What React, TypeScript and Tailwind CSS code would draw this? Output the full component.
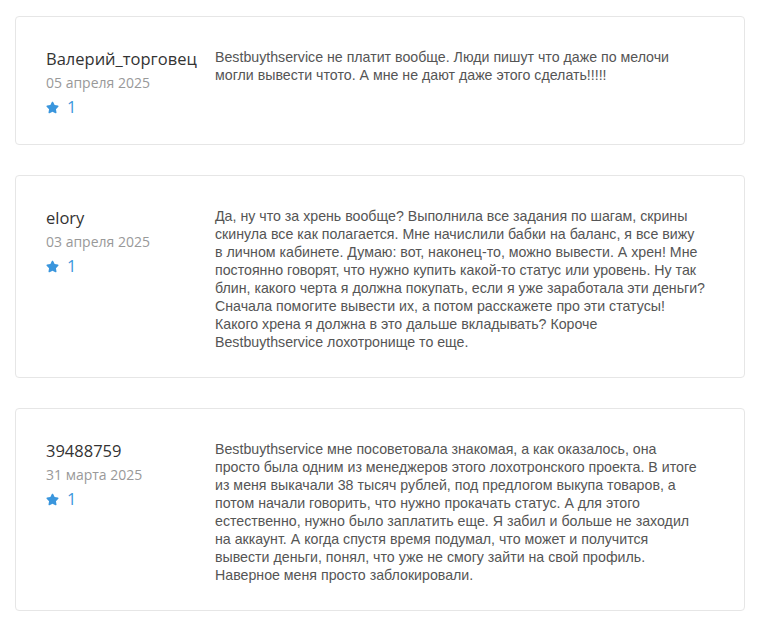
import React from 'react'

type Review = {
    name: string
    date: string
    rating: number
    lines: string[]
}

// строки разбиты как на скриншоте
const reviews: Review[] = [
    {
        name: 'Валерий_торговец',
        date: '05 апреля 2025',
        rating: 1,
        lines: [
            'Bestbuythservice не платит вообще. Люди пишут что даже по мелочи',
            'могли вывести чтото. А мне не дают даже этого сделать!!!!!',
        ],
    },
    {
        name: 'elory',
        date: '03 апреля 2025',
        rating: 1,
        lines: [
            'Да, ну что за хрень вообще? Выполнила все задания по шагам, скрины',
            'скинула все как полагается. Мне начислили бабки на баланс, я все вижу',
            'в личном кабинете. Думаю: вот, наконец-то, можно вывести. А хрен! Мне',
            'постоянно говорят, что нужно купить какой-то статус или уровень. Ну так',
            'блин, какого черта я должна покупать, если я уже заработала эти деньги?',
            'Сначала помогите вывести их, а потом расскажете про эти статусы!',
            'Какого хрена я должна в это дальше вкладывать? Короче',
            'Bestbuythservice лохотронище то еще.',
        ],
    },
    {
        name: '39488759',
        date: '31 марта 2025',
        rating: 1,
        lines: [
            'Bestbuythservice мне посоветовала знакомая, а как оказалось, она',
            'просто была одним из менеджеров этого лохотронского проекта. В итоге',
            'из меня выкачали 38 тысяч рублей, под предлогом выкупа товаров, а',
            'потом начали говорить, что нужно прокачать статус. А для этого',
            'естественно, нужно было заплатить еще. Я забил и больше не заходил',
            'на аккаунт. А когда спустя время подумал, что может и получится',
            'вывести деньги, понял, что уже не смогу зайти на свой профиль.',
            'Наверное меня просто заблокировали.',
        ],
    },
]

function Star() {
    return (
        <svg viewBox="0 0 576 512" className="h-[13px] w-[13px] fill-[#3a96dd]">
            <path d="M259.3 17.8L194 150.2 47.9 171.5c-26.2 3.8-36.7 36.1-17.7 54.6l105.7 103-25 145.5c-4.5 26.3 23.2 46 46.4 33.7L288 439.6l130.7 68.7c23.2 12.2 50.9-7.4 46.4-33.7l-25-145.5 105.7-103c19-18.5 8.5-50.8-17.7-54.6L382 150.2 316.7 17.8c-11.7-23.6-45.6-23.9-57.4 0z" />
        </svg>
    )
}

function ReviewCard({ review }: { review: Review }) {
    return (
        <div className="flex min-h-[129px] rounded-[4px] border border-[#e6e6e6] bg-white px-[30px] pt-[30px] pb-[26px]">
            <div className="w-[169px] shrink-0 font-['Open_Sans',sans-serif]">
                <div className="text-[16.5px] leading-6 text-[#333]">{review.name}</div>
                <div className="text-[14px] leading-6 text-[#999]">{review.date}</div>
                <div className="mt-[2px] flex h-5 items-center gap-[8px] text-[16.5px] text-[#3a96dd]">
                    <Star />
                    <span>{review.rating}</span>
                </div>
            </div>
            <div className="mt-px font-['Liberation_Sans',Arial,sans-serif] text-[14.2px] leading-[18px] text-[#555]">
                {review.lines.map((line, i) => (
                    <div key={i} className="whitespace-nowrap">{line}</div>
                ))}
            </div>
        </div>
    )
}

export default function App() {
    return (
        <div className="min-h-[623px] w-full bg-white">
            <div className="ml-[15px] flex w-[730px] flex-col gap-[30px] pt-4">
                {reviews.map((r) => (
                    <ReviewCard key={r.name} review={r} />
                ))}
            </div>
        </div>
    )
}
